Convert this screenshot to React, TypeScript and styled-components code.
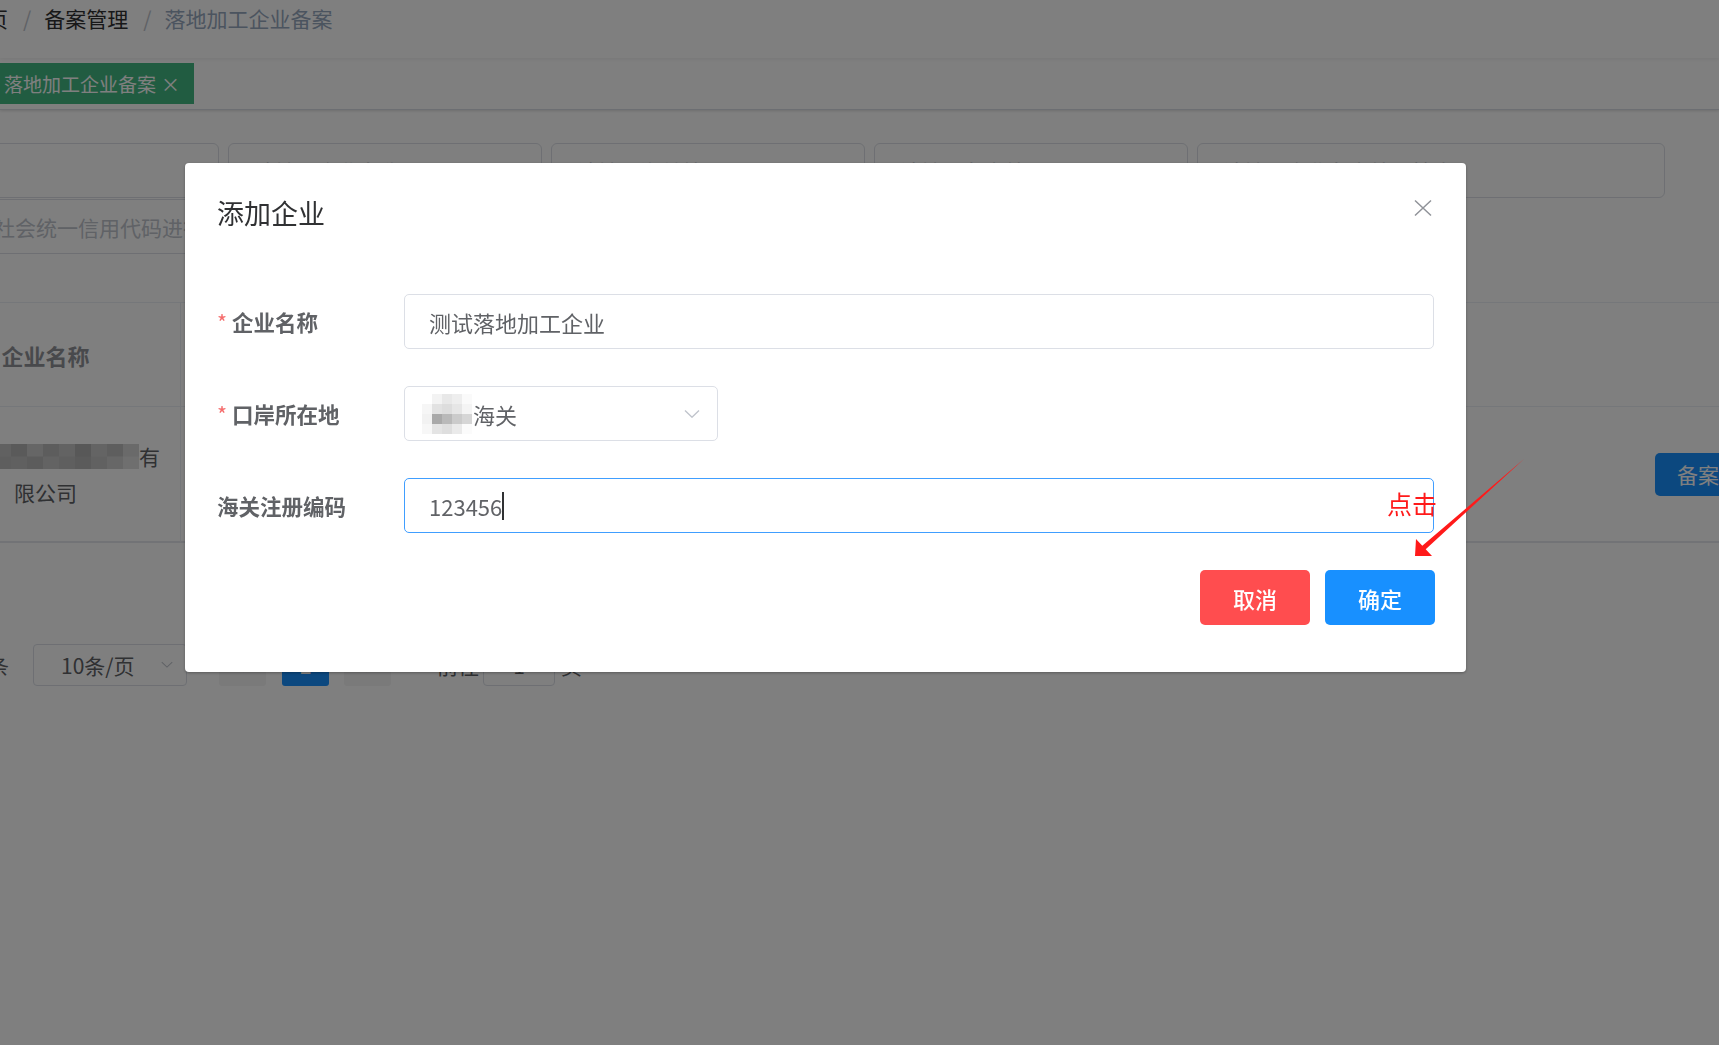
import React from 'react';
import styled, { createGlobalStyle } from 'styled-components';

const GlobalStyle = createGlobalStyle`
  html, body {
    margin: 0;
    padding: 0;
  }
  body {
    font-family: "Noto Sans CJK SC", "Noto Sans", sans-serif;
    background: #fff;
    color: #303133;
  }
  * {
    box-sizing: border-box;
  }
`;

// --- mosaic used to hide sensitive names in the screenshot ---
type MosaicProps = { cols: number; w: number; h: number; cells: string[] };

const Mosaic = ({ cols, w, h, cells }: MosaicProps) => {
  const rows = Math.ceil(cells.length / cols);
  return (
    <MosaicSvg width={cols * w} height={rows * h} viewBox={`0 0 ${cols * w} ${rows * h}`}>
      {cells.map((c, i) => (
        <rect key={i} x={(i % cols) * w} y={Math.floor(i / cols) * h} width={w + 0.5} height={h + 0.5} fill={c} />
      ))}
    </MosaicSvg>
  );
};

const MosaicSvg = styled.svg`
  display: inline-block;
  vertical-align: middle;
  flex: none;
`;

const tableCells = [
  '#e2e2e2', '#c9c9c9', '#bcbcbc', '#d6d6d6', '#c2c2c2', '#b4b4b4', '#cdcdcd', '#bababa', '#c6c6c6', '#b0b0b0', '#c8c8c8', '#bdbdbd', '#d4d4d4',
  '#eaeaea', '#d2d2d2', '#c4c4c4', '#cbcbcb', '#bdbdbd', '#c0c0c0', '#b8b8b8', '#c6c6c6', '#bfbfbf', '#b6b6b6', '#c3c3c3', '#cfcfcf', '#dedede',
];

const selectCells = [
  '#ffffff', '#f3f3f3', '#e8e8e8', '#eeeeee', '#fafafa',
  '#f6f6f6', '#e2e2e2', '#dddddd', '#e6e6e6', '#f4f4f4',
  '#f2f2f2', '#a9a9a9', '#b9b9b9', '#cbcbcb', '#d6d6d6',
  '#f7f7f7', '#e4e4e4', '#dedede', '#eaeaea', '#fbfbfb',
];

const Chevron = ({ size = 16 }: { size?: number }) => (
  <svg width={size} height={size * 0.6} viewBox="0 0 16 9.6">
    <polyline points="1,1.5 8,8.2 15,1.5" fill="none" stroke="#c0c4cc" strokeWidth="1.4" />
  </svg>
);

export default function App() {
  return (
    <Page>
      <GlobalStyle />
      <Navbar>
        <Breadcrumb>
          <Crumb>首页</Crumb>
          <Sep>/</Sep>
          <Crumb>备案管理</Crumb>
          <Sep>/</Sep>
          <Crumb $current>落地加工企业备案</Crumb>
        </Breadcrumb>
      </Navbar>

      <TagsBar>
        <Tag>
          落地加工企业备案
          <TagClose>×</TagClose>
        </Tag>
      </TagsBar>

      <Content>
        <Filters>
          <FilterBox />
          <FilterBox>请输入企业名称</FilterBox>
          <FilterBox>请输入海关编码</FilterBox>
          <FilterBox>请输入备案编号</FilterBox>
          <FilterBox>请输入企业备案编号搜索</FilterBox>
          <FilterBox $span={2}>请输入社会统一信用代码进行搜索</FilterBox>
        </Filters>

        <Table>
          <HeadCell $divider>企业名称</HeadCell>
          <HeadCell>口岸所在地</HeadCell>
          <HeadCell />
          <BodyCell $divider>
            <NameLine>
              <Mosaic cols={13} w={16} h={12.5} cells={tableCells} />
              有
            </NameLine>
            <NameLine>限公司</NameLine>
          </BodyCell>
          <BodyCell />
          <BodyCell $align="start">
            <RowButton>备案</RowButton>
          </BodyCell>
        </Table>

        <Pager>
          <Total>共 1 条</Total>
          <SizeSelect>
            <span>10条/页</span>
            <Chevron size={12} />
          </SizeSelect>
          <PageBtn $gap={32}>‹</PageBtn>
          <PageBtn $gap={16} $active>1</PageBtn>
          <PageBtn $gap={15}>›</PageBtn>
          <JumpText $gap={46}>前往</JumpText>
          <JumpInput>1</JumpInput>
          <JumpText $gap={6}>页</JumpText>
        </Pager>
      </Content>

      <Overlay>
        <Dialog>
          <DialogHeader>
            <DialogTitle>添加企业</DialogTitle>
            <CloseBtn>
              <svg width="18" height="18" viewBox="0 0 18 18">
                <path d="M1 1.5 L17 16.5 M17 1.5 L1 16.5" stroke="#909399" strokeWidth="1.5" fill="none" />
              </svg>
            </CloseBtn>
          </DialogHeader>

          <DialogBody>
            <FormItem>
              <Label $required>企业名称</Label>
              <Input>测试落地加工企业</Input>
            </FormItem>
            <FormItem>
              <Label $required>口岸所在地</Label>
              <Select>
                <SelectValue>
                  <Mosaic cols={5} w={10} h={10} cells={selectCells} />
                  海关
                </SelectValue>
                <Chevron />
              </Select>
            </FormItem>
            <FormItem>
              <Label>海关注册编码</Label>
              <Input $focused>
                123456
                <Caret />
              </Input>
            </FormItem>
          </DialogBody>

          <DialogFooter>
            <Button $kind="danger">取消</Button>
            <Button $kind="primary">确定</Button>
          </DialogFooter>
        </Dialog>
      </Overlay>

      <Annotation>
        <svg width="100%" height="100%">
          <polygon
            points="1415,556 1416,539 1422.3,545.7 1524,459 1425.7,549.3 1432,556"
            fill="#ff1a1a"
          />
        </svg>
        <ClickNote>点击</ClickNote>
      </Annotation>
    </Page>
  );
}

const Page = styled.div`
  position: relative;
  width: 100vw;
  height: 100vh;
  overflow: hidden;
  background: #fff;
`;

const Navbar = styled.header`
  position: relative;
  z-index: 1;
  height: 58px;
  display: flex;
  align-items: flex-start;
  padding-top: 6px;
  background: #fff;
  box-shadow: 0 1px 4px rgba(0, 21, 41, 0.08);
`;

const Breadcrumb = styled.nav`
  display: flex;
  align-items: center;
  margin-left: -34px;
  font-size: 21px;
  line-height: 25px;
`;

const Crumb = styled.span<{ $current?: boolean }>`
  color: ${(p) => (p.$current ? '#97a8be' : '#303133')};
`;

const Sep = styled.span`
  margin: 0 13px 0 15px;
  color: #c0c4cc;
`;

const TagsBar = styled.div`
  height: 52px;
  display: flex;
  align-items: center;
  background: #fff;
  border-bottom: 1px solid #d8dce5;
  box-shadow: 0 1px 3px 0 rgba(0, 0, 0, 0.12), 0 0 3px 0 rgba(0, 0, 0, 0.04);
`;

const Tag = styled.div`
  margin-left: -10px;
  height: 41px;
  display: flex;
  align-items: center;
  padding: 0 14px 0 14px;
  background: #42b983;
  color: #fff;
  font-size: 19px;
`;

const TagClose = styled.span`
  margin-left: 5px;
  font-size: 19px;
  line-height: 1;
`;

const Content = styled.main`
  margin-left: -95px;
  padding-top: 33px;
`;

const Filters = styled.div`
  display: grid;
  grid-template-columns: repeat(4, 314px) 468px;
  column-gap: 9px;
  row-gap: 1px;
`;

const FilterBox = styled.div<{ $span?: number }>`
  grid-column: span ${(p) => p.$span ?? 1};
  height: 55px;
  display: flex;
  align-items: center;
  padding: 0 25px;
  border: 1px solid #dcdfe6;
  border-radius: 6px;
  font-size: 21px;
  color: #c0c4cc;
  white-space: nowrap;
  overflow: hidden;
`;

const Table = styled.div`
  margin-top: 48px;
  width: 1885px;
  display: grid;
  grid-template-columns: 276px 1fr 160px;
  grid-template-rows: 104px 136px;
  border-top: 1px solid #ebeef5;
`;

const HeadCell = styled.div<{ $divider?: boolean }>`
  display: flex;
  align-items: center;
  justify-content: center;
  padding-left: ${(p) => (p.$divider ? '6px' : '0')};
  border-bottom: 1px solid #ebeef5;
  border-right: ${(p) => (p.$divider ? '1px solid #ebeef5' : 'none')};
  font-size: 22px;
  font-weight: 700;
  color: #909399;
`;

const BodyCell = styled.div<{ $divider?: boolean; $align?: 'start' | 'center' }>`
  display: flex;
  flex-direction: column;
  align-items: ${(p) => (p.$align === 'start' ? 'flex-start' : 'center')};
  justify-content: center;
  padding-left: ${(p) => (p.$align === 'start' ? '25px' : p.$divider ? '6px' : '0')};
  border-bottom: 2px solid #e4e7ed;
  border-right: ${(p) => (p.$divider ? '1px solid #ebeef5' : 'none')};
  font-size: 21px;
  line-height: 36px;
  color: #606266;
`;

const NameLine = styled.div`
  display: flex;
  align-items: center;
  white-space: nowrap;
`;

const RowButton = styled.button`
  height: 43px;
  padding: 0 22px;
  border: none;
  border-radius: 5px;
  background: #1890ff;
  color: #fff;
  font-family: inherit;
  font-size: 21px;
  white-space: nowrap;
`;

const Pager = styled.div`
  margin-top: 101px;
  height: 42px;
  display: flex;
  align-items: center;
  font-size: 21px;
  color: #606266;
`;

const Total = styled.span`
  width: 104px;
  text-align: right;
  white-space: nowrap;
`;

const SizeSelect = styled.div`
  margin-left: 24px;
  width: 154px;
  height: 42px;
  display: flex;
  align-items: center;
  justify-content: space-between;
  padding: 0 13px 0 27px;
  border: 1px solid #dcdfe6;
  border-radius: 4px;
`;

const PageBtn = styled.div<{ $gap: number; $active?: boolean }>`
  margin-left: ${(p) => p.$gap}px;
  width: 47px;
  height: 42px;
  display: flex;
  align-items: center;
  justify-content: center;
  border-radius: 3px;
  background: ${(p) => (p.$active ? '#1890ff' : '#f4f4f5')};
  color: ${(p) => (p.$active ? '#fff' : '#c0c4cc')};
  font-size: 21px;
  font-weight: 700;
`;

const JumpText = styled.span<{ $gap: number }>`
  margin-left: ${(p) => p.$gap}px;
`;

const JumpInput = styled.div`
  margin-left: 4px;
  width: 72px;
  height: 42px;
  display: flex;
  align-items: center;
  justify-content: center;
  border: 1px solid #dcdfe6;
  border-radius: 4px;
`;

const Overlay = styled.div`
  position: fixed;
  inset: 0;
  z-index: 10;
  background: rgba(0, 0, 0, 0.5);
  padding: 163px 0 0 185px;
`;

const Dialog = styled.section`
  width: 1281px;
  background: #fff;
  border-radius: 4px;
  box-shadow: 0 1px 3px rgba(0, 0, 0, 0.3);
`;

const DialogHeader = styled.div`
  display: flex;
  justify-content: space-between;
  align-items: flex-start;
  padding: 30px 34px 0 32px;
`;

const DialogTitle = styled.h2`
  margin: 0;
  font-size: 27px;
  font-weight: 400;
  line-height: 40px;
  color: #303133;
`;

const CloseBtn = styled.button`
  margin-top: 6px;
  padding: 0;
  border: none;
  background: none;
  display: flex;
`;

const DialogBody = styled.div`
  padding: 61px 32px 0;
`;

const FormItem = styled.div`
  display: flex;
  align-items: center;
  margin-bottom: 37px;
`;

const Label = styled.label<{ $required?: boolean }>`
  width: 187px;
  flex: none;
  font-size: 21.5px;
  font-weight: 700;
  color: #606266;
  white-space: nowrap;

  &::before {
    content: ${(p) => (p.$required ? '"*"' : 'none')};
    color: #f56c6c;
    margin-right: 5px;
    font-weight: 400;
  }
`;

const Input = styled.div<{ $focused?: boolean }>`
  flex: 1;
  height: 55px;
  display: flex;
  align-items: center;
  padding: 0 24px;
  border: 1px solid ${(p) => (p.$focused ? '#409eff' : '#dcdfe6')};
  border-radius: 5px;
  font-size: 22px;
  color: #606266;
`;

const Caret = styled.span`
  display: inline-block;
  width: 2px;
  height: 28px;
  background: #303133;
`;

const Select = styled.div`
  width: 314px;
  height: 55px;
  display: flex;
  align-items: center;
  justify-content: space-between;
  padding: 0 17px 0 17px;
  border: 1px solid #dcdfe6;
  border-radius: 5px;
  font-size: 22px;
  color: #606266;
`;

const SelectValue = styled.span`
  display: flex;
  align-items: center;
  gap: 1px;
`;

const DialogFooter = styled.div`
  display: flex;
  justify-content: flex-end;
  gap: 15px;
  padding: 0 31px 47px;
`;

const Button = styled.button<{ $kind: 'primary' | 'danger' }>`
  width: 110px;
  height: 55px;
  border: none;
  border-radius: 5px;
  background: ${(p) => (p.$kind === 'primary' ? '#1890ff' : '#ff4d4f')};
  color: #fff;
  font-family: inherit;
  font-size: 22px;
  font-weight: 500;
`;

const Annotation = styled.div`
  position: fixed;
  inset: 0;
  z-index: 20;
  pointer-events: none;
`;

const ClickNote = styled.span`
  position: absolute;
  left: 1387px;
  top: 487px;
  font-size: 25px;
  line-height: 32px;
  color: #ff1a1a;
`;
